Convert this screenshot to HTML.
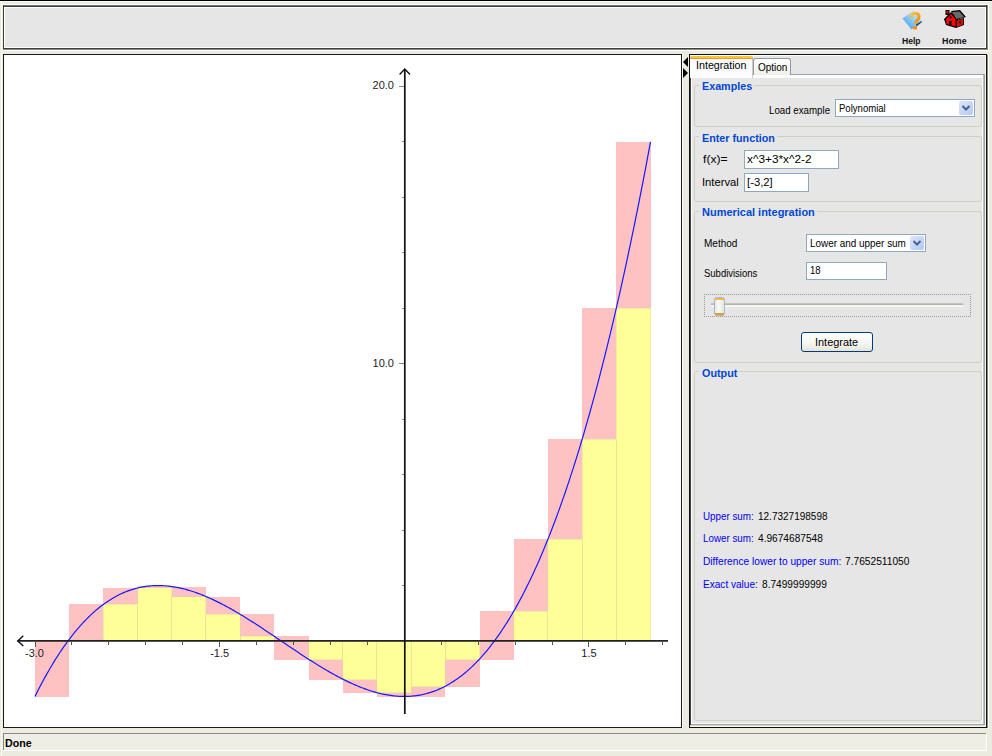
<!DOCTYPE html>
<html><head><meta charset="utf-8">
<style>
html,body{margin:0;padding:0;}
body{width:992px;height:756px;position:relative;overflow:hidden;background:#ecebdf;font-family:"Liberation Sans",sans-serif;font-size:10px;color:#000;}
.a{position:absolute;}
.box{position:absolute;box-sizing:border-box;}
.t{position:absolute;white-space:nowrap;line-height:1;transform-origin:0 0;}
.gb{position:absolute;box-sizing:border-box;border:1px solid #d0d0bf;border-radius:3px;}
.gt{position:absolute;white-space:nowrap;font-weight:bold;font-size:11px;color:#0046d5;background:#e6e6e6;padding:0 2px;line-height:1;}
.tf{position:absolute;box-sizing:border-box;border:1px solid #8fa8c0;background:#fff;}
</style></head><body>
<!-- top black line -->
<div class="a" style="left:0;top:0;width:992px;height:1px;background:#000"></div>
<div class="a" style="left:0;top:1px;width:992px;height:1px;background:#fbfbf3"></div>
<div class="a" style="left:1px;top:1px;width:1px;height:755px;background:#fbfbf3"></div>
<!-- header -->
<div class="box" style="left:3px;top:4px;width:986px;height:47px;background:#fff;"></div>
<div class="box" style="left:3px;top:5px;width:985px;height:45px;background:#8a8a82;"></div>
<div class="box" style="left:3px;top:5px;width:984px;height:44px;background:#3e3e3e;"></div>
<div class="box" style="left:4px;top:5px;width:982px;height:1px;background:#767676;"></div>
<div class="box" style="left:4px;top:7px;width:982px;height:41px;background:#fff;"></div>
<div class="box" style="left:5px;top:8px;width:980px;height:39px;background:#e6e6e6;"></div>
<!-- plot panel -->
<div class="box" style="left:682px;top:54px;width:1px;height:674px;background:#fff;"></div>
<div class="box" style="left:3px;top:54px;width:679px;height:674px;background:#1a1a1a;"></div>
<div class="box" style="left:4px;top:55px;width:677px;height:672px;background:#fff;"></div>
<!-- right panel -->
<div class="box" style="left:988px;top:54px;width:1px;height:675px;background:#fff;"></div>
<div class="box" style="left:987px;top:55px;width:1px;height:673px;background:#8a8a82;"></div>
<div class="box" style="left:689px;top:54px;width:298px;height:674px;background:#111;"></div>
<div class="box" style="left:690px;top:55px;width:296px;height:672px;background:#f8f6e6;"></div>
<div class="box" style="left:690px;top:55px;width:295px;height:670px;background:#fff;"></div>
<div class="box" style="left:690px;top:56px;width:295px;height:18px;background:#e6e6e6;"></div>
<div class="box" style="left:690px;top:74px;width:295px;height:651px;background:#9ca5a5;"></div>
<div class="box" style="left:983px;top:75px;width:1px;height:649px;background:#b8c0c4;"></div>
<div class="box" style="left:690px;top:74px;width:1px;height:651px;background:#3c4648;"></div>
<div class="box" style="left:691px;top:75px;width:292px;height:649px;background:#fcfcfe;"></div>
<div class="box" style="left:692px;top:78px;width:290px;height:645px;background:#e6e6e6;"></div>
<div class="box" style="left:690px;top:725px;width:295px;height:1px;background:#d8dad6;"></div>
<!-- split arrows -->
<svg class="a" style="left:682px;top:56px" width="8" height="24"><path d="M6,1 L1,6 L6,11 Z" fill="#000"/><path d="M1,12 L6,17 L1,22 Z" fill="#000"/></svg>
<!-- tabs -->
<div class="box" style="left:690px;top:56px;width:63px;height:22px;background:#fcfcfe;border-right:1px solid #c8ccd0;border-radius:0 3px 0 0;"></div>
<div class="box" style="left:690px;top:56px;width:63px;height:3px;background:linear-gradient(#ffc83c,#e8901c);border-radius:2px 3px 0 0;"></div>
<div class="box" style="left:692px;top:57px;width:60px;height:1px;background:#ffc83c;"></div>
<div class="box" style="left:753px;top:58px;width:38px;height:17px;background:linear-gradient(#fff,#f0f0ea);border:1px solid #919b9c;border-bottom:none;border-radius:3px 3px 0 0;"></div>

<!-- Examples -->
<div class="gb" style="left:694px;top:85px;width:288px;height:42px;"></div>
<div class="a" style="left:699px;top:84px;width:55px;height:3px;background:#e6e6e6"></div>
<div class="tf" style="left:835px;top:99px;width:140px;height:18px;"></div>
<div class="a" style="left:959px;top:101px;width:14px;height:14px;background:linear-gradient(135deg,#dce6fd,#b3c8f7);border-radius:2px;"></div>
<svg class="a" style="left:959px;top:101px" width="14" height="14"><path d="M3.5,5 L7,8.5 L10.5,5" fill="none" stroke="#4d6185" stroke-width="2"/></svg>

<!-- Enter function -->
<div class="gb" style="left:694px;top:136px;width:288px;height:66px;"></div>
<div class="a" style="left:699px;top:135px;width:78px;height:3px;background:#e6e6e6"></div>
<div class="tf" style="left:744px;top:150px;width:95px;height:19px;"></div>
<div class="tf" style="left:744px;top:173px;width:65px;height:19px;"></div>

<!-- Numerical integration -->
<div class="gb" style="left:694px;top:211px;width:288px;height:152px;"></div>
<div class="a" style="left:699px;top:210px;width:118px;height:3px;background:#e6e6e6"></div>
<div class="tf" style="left:806px;top:234px;width:120px;height:18px;"></div>
<div class="a" style="left:910px;top:236px;width:14px;height:14px;background:linear-gradient(135deg,#dce6fd,#b3c8f7);border-radius:2px;"></div>
<svg class="a" style="left:910px;top:236px" width="14" height="14"><path d="M3.5,5 L7,8.5 L10.5,5" fill="none" stroke="#4d6185" stroke-width="2"/></svg>
<div class="tf" style="left:806px;top:262px;width:81px;height:18px;"></div>
<!-- slider -->
<div class="a" style="left:704px;top:294px;width:267px;height:23px;box-sizing:border-box;border:1px dotted #999;"></div>
<div class="a" style="left:711px;top:303px;width:252px;height:1px;background:#c4c3bc;"></div>
<div class="a" style="left:711px;top:304px;width:252px;height:1px;background:#b4b3ac;"></div>
<div class="a" style="left:711px;top:305px;width:252px;height:2px;background:#f6f5ee;"></div>
<div class="a" style="left:714px;top:297px;width:11px;height:19px;box-sizing:border-box;border:1px solid #a7b8c8;border-radius:3px;background:linear-gradient(90deg,#e8e8e2,#fafaf8 40%,#e4e4de);"></div>
<div class="a" style="left:715px;top:298px;width:9px;height:2px;background:#f7b64a;"></div>
<div class="a" style="left:715px;top:313px;width:9px;height:2px;background:#e59c2c;"></div>
<!-- button -->
<div class="a" style="left:801px;top:332px;width:72px;height:20px;box-sizing:border-box;border:1px solid #003c74;border-radius:3px;background:linear-gradient(#fff 0%,#f4f4f0 60%,#e6e4da 100%);"></div>

<!-- Output -->
<div class="gb" style="left:694px;top:371px;width:288px;height:350px;"></div>
<div class="a" style="left:699px;top:370px;width:40px;height:3px;background:#e6e6e6"></div>

<!-- status bar -->
<div class="a" style="left:3px;top:733px;width:984px;height:18px;background:#fff;"></div>
<div class="a" style="left:3px;top:733px;width:983px;height:17px;background:#888;"></div>
<div class="a" style="left:4px;top:734px;width:982px;height:16px;background:#efeee4;"></div>

<!-- help/home -->
<svg class="a" style="left:900px;top:8px" width="26" height="24">
  <defs><linearGradient id="hb" x1="0" y1="1" x2="1" y2="0"><stop offset="0" stop-color="#2f8ee8"/><stop offset="0.5" stop-color="#8ccaf6"/><stop offset="1" stop-color="#e4f4fc"/></linearGradient>
  <linearGradient id="ho" x1="0" y1="0" x2="1" y2="1"><stop offset="0" stop-color="#ffc640"/><stop offset="1" stop-color="#f08800"/></linearGradient></defs>
  <path d="M2.5,10.5 L13,3 L22,12.5 L11.5,21.5 Z" fill="url(#hb)"/>
  <path d="M16,16.5 L21.5,13 L22,14 L16.5,18.5 Z" fill="#1c3f6a"/>
  <path d="M11.3,9.6 C11.1,6.4 13.3,5.2 15.3,5.2 C17.9,5.2 19.3,6.9 19,9.2 C18.7,11.4 16.6,12.3 15.9,14 L15.6,15.6" fill="none" stroke="url(#ho)" stroke-width="3" stroke-linecap="butt"/>
  <rect x="13.2" y="18" width="3.8" height="3.4" fill="#f39000"/>
</svg>
<svg class="a" style="left:942px;top:8px" width="26" height="22">
  <rect x="3.5" y="2" width="4" height="5" fill="#000"/><rect x="4.5" y="3" width="2" height="2.5" fill="#e00"/>
  <path d="M2,11 L9,4 L16,11 L14,20 L4,17 Z" fill="#000"/>
  <path d="M9,3 L18,2 L24,9 L14,12 Z" fill="#000"/>
  <path d="M10,4 L17.5,3.5 L22,9 L14.5,11 Z" fill="#6a6a6a"/>
  <path d="M4,11 L9,6 L13.5,11 L13.5,18.5 L4.5,16 Z" fill="#f00"/>
  <path d="M14,12 L22,10 L22,17 L14,20 Z" fill="#000"/>
  <path d="M15,12.5 L21,11 L21,16.5 L15,19 Z" fill="#e00"/>
  <rect x="7" y="13" width="2.5" height="5" fill="#000"/>
  <rect x="7.5" y="8.5" width="2" height="2" fill="#000"/>
  <rect x="17" y="13" width="2" height="2.5" fill="#300"/>
</svg>

<svg width="992" height="756" style="position:absolute;left:0;top:0"><defs><clipPath id="pc"><rect x="5" y="56" width="675" height="670"/></clipPath></defs><g clip-path="url(#pc)" shape-rendering="crispEdges"><rect x="35.00" y="641.00" width="34.19" height="55.95" fill="#ffc2c2"/><rect x="69.19" y="604.41" width="34.19" height="36.59" fill="#ffc2c2"/><rect x="103.39" y="587.99" width="34.19" height="53.01" fill="#ffc2c2"/><rect x="103.39" y="604.41" width="34.19" height="36.59" fill="#ffc2c2"/><rect x="103.39" y="604.41" width="34.19" height="36.59" fill="#ffff99"/><rect x="137.58" y="585.55" width="34.19" height="55.45" fill="#ffc2c2"/><rect x="137.58" y="587.99" width="34.19" height="53.01" fill="#ffc2c2"/><rect x="137.58" y="587.99" width="34.19" height="53.01" fill="#ffff99"/><rect x="171.78" y="586.54" width="34.19" height="54.46" fill="#ffc2c2"/><rect x="171.78" y="596.50" width="34.19" height="44.50" fill="#ffc2c2"/><rect x="171.78" y="596.50" width="34.19" height="44.50" fill="#ffff99"/><rect x="205.97" y="596.50" width="34.19" height="44.50" fill="#ffc2c2"/><rect x="205.97" y="614.30" width="34.19" height="26.70" fill="#ffc2c2"/><rect x="205.97" y="614.30" width="34.19" height="26.70" fill="#ffff99"/><rect x="240.17" y="614.30" width="34.19" height="26.70" fill="#ffc2c2"/><rect x="240.17" y="636.38" width="34.19" height="4.62" fill="#ffc2c2"/><rect x="240.17" y="636.38" width="34.19" height="4.62" fill="#ffff99"/><rect x="274.36" y="636.38" width="34.19" height="4.62" fill="#ffc2c2"/><rect x="274.36" y="641.00" width="34.19" height="18.68" fill="#ffc2c2"/><rect x="308.56" y="641.00" width="34.19" height="18.68" fill="#ffc2c2"/><rect x="308.56" y="641.00" width="34.19" height="38.62" fill="#ffc2c2"/><rect x="308.56" y="641.00" width="34.19" height="18.68" fill="#ffff99"/><rect x="342.75" y="641.00" width="34.19" height="38.62" fill="#ffc2c2"/><rect x="342.75" y="641.00" width="34.19" height="52.15" fill="#ffc2c2"/><rect x="342.75" y="641.00" width="34.19" height="38.62" fill="#ffff99"/><rect x="376.94" y="641.00" width="34.19" height="52.15" fill="#ffc2c2"/><rect x="376.94" y="641.00" width="34.19" height="55.95" fill="#ffc2c2"/><rect x="376.94" y="641.00" width="34.19" height="52.15" fill="#ffff99"/><rect x="411.14" y="641.00" width="34.19" height="45.68" fill="#ffc2c2"/><rect x="411.14" y="641.00" width="34.19" height="55.69" fill="#ffc2c2"/><rect x="411.14" y="641.00" width="34.19" height="45.68" fill="#ffff99"/><rect x="445.33" y="641.00" width="34.19" height="18.56" fill="#ffc2c2"/><rect x="445.33" y="641.00" width="34.19" height="45.68" fill="#ffc2c2"/><rect x="445.33" y="641.00" width="34.19" height="18.56" fill="#ffff99"/><rect x="479.53" y="611.26" width="34.19" height="29.74" fill="#ffc2c2"/><rect x="479.53" y="641.00" width="34.19" height="18.56" fill="#ffc2c2"/><rect x="513.72" y="539.21" width="34.19" height="101.79" fill="#ffc2c2"/><rect x="513.72" y="611.26" width="34.19" height="29.74" fill="#ffc2c2"/><rect x="513.72" y="611.26" width="34.19" height="29.74" fill="#ffff99"/><rect x="547.92" y="439.36" width="34.19" height="201.64" fill="#ffc2c2"/><rect x="547.92" y="539.21" width="34.19" height="101.79" fill="#ffc2c2"/><rect x="547.92" y="539.21" width="34.19" height="101.79" fill="#ffff99"/><rect x="582.11" y="308.12" width="34.19" height="332.88" fill="#ffc2c2"/><rect x="582.11" y="439.36" width="34.19" height="201.64" fill="#ffc2c2"/><rect x="582.11" y="439.36" width="34.19" height="201.64" fill="#ffff99"/><rect x="616.31" y="141.95" width="34.19" height="499.05" fill="#ffc2c2"/><rect x="616.31" y="308.12" width="34.19" height="332.88" fill="#ffc2c2"/><rect x="616.31" y="308.12" width="34.19" height="332.88" fill="#ffff99"/><rect x="69.19" y="639.38" width="34.19" height="1.62" fill="none" stroke="#d8d6a0" stroke-width="0.6" stroke-opacity="0.7"/><rect x="103.39" y="604.41" width="34.19" height="36.59" fill="none" stroke="#d8d6a0" stroke-width="0.6" stroke-opacity="0.7"/><rect x="137.58" y="587.99" width="34.19" height="53.01" fill="none" stroke="#d8d6a0" stroke-width="0.6" stroke-opacity="0.7"/><rect x="171.78" y="596.50" width="34.19" height="44.50" fill="none" stroke="#d8d6a0" stroke-width="0.6" stroke-opacity="0.7"/><rect x="205.97" y="614.30" width="34.19" height="26.70" fill="none" stroke="#d8d6a0" stroke-width="0.6" stroke-opacity="0.7"/><rect x="240.17" y="636.38" width="34.19" height="4.62" fill="none" stroke="#d8d6a0" stroke-width="0.6" stroke-opacity="0.7"/><rect x="308.56" y="641.00" width="34.19" height="18.18" fill="none" stroke="#d8d6a0" stroke-width="0.6" stroke-opacity="0.7"/><rect x="342.75" y="641.00" width="34.19" height="38.12" fill="none" stroke="#d8d6a0" stroke-width="0.6" stroke-opacity="0.7"/><rect x="376.94" y="641.00" width="34.19" height="51.65" fill="none" stroke="#d8d6a0" stroke-width="0.6" stroke-opacity="0.7"/><rect x="411.14" y="641.00" width="34.19" height="45.18" fill="none" stroke="#d8d6a0" stroke-width="0.6" stroke-opacity="0.7"/><rect x="445.33" y="641.00" width="34.19" height="18.06" fill="none" stroke="#d8d6a0" stroke-width="0.6" stroke-opacity="0.7"/><rect x="513.72" y="611.26" width="34.19" height="29.74" fill="none" stroke="#d8d6a0" stroke-width="0.6" stroke-opacity="0.7"/><rect x="547.92" y="539.21" width="34.19" height="101.79" fill="none" stroke="#d8d6a0" stroke-width="0.6" stroke-opacity="0.7"/><rect x="582.11" y="439.36" width="34.19" height="201.64" fill="none" stroke="#d8d6a0" stroke-width="0.6" stroke-opacity="0.7"/><rect x="616.31" y="308.12" width="34.19" height="332.88" fill="none" stroke="#d8d6a0" stroke-width="0.6" stroke-opacity="0.7"/></g><g clip-path="url(#pc)"><polyline fill="none" stroke="#1818ff" stroke-width="1.2" points="35.00,696.45 36.54,693.36 38.08,690.32 39.62,687.33 41.16,684.39 42.69,681.50 44.23,678.66 45.77,675.87 47.31,673.13 48.85,670.44 50.39,667.80 51.93,665.21 53.47,662.67 55.00,660.18 56.54,657.73 58.08,655.33 59.62,652.98 61.16,650.67 62.70,648.41 64.24,646.20 65.78,644.03 67.31,641.91 68.85,639.83 70.39,637.80 71.93,635.82 73.47,633.87 75.01,631.97 76.55,630.12 78.09,628.31 79.62,626.54 81.16,624.81 82.70,623.12 84.24,621.48 85.78,619.88 87.32,618.32 88.86,616.80 90.40,615.32 91.93,613.89 93.47,612.49 95.01,611.13 96.55,609.81 98.09,608.53 99.63,607.29 101.17,606.08 102.70,604.92 104.24,603.79 105.78,602.70 107.32,601.65 108.86,600.63 110.40,599.65 111.94,598.71 113.48,597.80 115.01,596.93 116.55,596.09 118.09,595.29 119.63,594.52 121.17,593.78 122.71,593.08 124.25,592.42 125.79,591.78 127.33,591.18 128.86,590.61 130.40,590.08 131.94,589.57 133.48,589.10 135.02,588.66 136.56,588.25 138.10,587.87 139.64,587.52 141.17,587.19 142.71,586.90 144.25,586.64 145.79,586.41 147.33,586.21 148.87,586.03 150.41,585.88 151.95,585.76 153.48,585.67 155.02,585.60 156.56,585.56 158.10,585.55 159.64,585.56 161.18,585.60 162.72,585.67 164.26,585.75 165.79,585.87 167.33,586.01 168.87,586.17 170.41,586.35 171.95,586.56 173.49,586.80 175.03,587.05 176.56,587.33 178.10,587.63 179.64,587.95 181.18,588.29 182.72,588.66 184.26,589.04 185.80,589.44 187.34,589.87 188.88,590.32 190.41,590.78 191.95,591.26 193.49,591.77 195.03,592.29 196.57,592.83 198.11,593.38 199.65,593.96 201.19,594.55 202.72,595.16 204.26,595.78 205.80,596.43 207.34,597.08 208.88,597.76 210.42,598.45 211.96,599.15 213.50,599.87 215.03,600.60 216.57,601.35 218.11,602.10 219.65,602.88 221.19,603.66 222.73,604.46 224.27,605.27 225.81,606.10 227.34,606.93 228.88,607.78 230.42,608.64 231.96,609.50 233.50,610.38 235.04,611.27 236.58,612.17 238.12,613.08 239.65,613.99 241.19,614.92 242.73,615.85 244.27,616.80 245.81,617.75 247.35,618.70 248.89,619.67 250.43,620.64 251.96,621.62 253.50,622.60 255.04,623.59 256.58,624.59 258.12,625.59 259.66,626.59 261.20,627.60 262.74,628.62 264.27,629.64 265.81,630.66 267.35,631.68 268.89,632.71 270.43,633.74 271.97,634.77 273.51,635.81 275.05,636.84 276.58,637.88 278.12,638.92 279.66,639.96 281.20,641.00 282.74,642.04 284.28,643.08 285.82,644.12 287.36,645.16 288.89,646.19 290.43,647.23 291.97,648.26 293.51,649.29 295.05,650.32 296.59,651.34 298.13,652.36 299.67,653.38 301.20,654.40 302.74,655.41 304.28,656.41 305.82,657.41 307.36,658.41 308.90,659.40 310.44,660.38 311.98,661.36 313.51,662.33 315.05,663.30 316.59,664.25 318.13,665.20 319.67,666.15 321.21,667.08 322.75,668.01 324.29,668.92 325.82,669.83 327.36,670.73 328.90,671.62 330.44,672.50 331.98,673.36 333.52,674.22 335.06,675.07 336.60,675.90 338.13,676.73 339.67,677.54 341.21,678.34 342.75,679.12 344.29,679.90 345.83,680.65 347.37,681.40 348.90,682.13 350.44,682.85 351.98,683.55 353.52,684.24 355.06,684.92 356.60,685.57 358.14,686.22 359.68,686.84 361.22,687.45 362.75,688.04 364.29,688.62 365.83,689.17 367.37,689.71 368.91,690.23 370.45,690.74 371.99,691.22 373.53,691.68 375.06,692.13 376.60,692.56 378.14,692.96 379.68,693.34 381.22,693.71 382.76,694.05 384.30,694.37 385.84,694.67 387.37,694.95 388.91,695.20 390.45,695.44 391.99,695.65 393.53,695.83 395.07,695.99 396.61,696.13 398.15,696.25 399.68,696.33 401.22,696.40 402.76,696.44 404.30,696.45 405.84,696.44 407.38,696.40 408.92,696.33 410.45,696.24 411.99,696.12 413.53,695.97 415.07,695.79 416.61,695.59 418.15,695.36 419.69,695.10 421.23,694.81 422.76,694.48 424.30,694.13 425.84,693.75 427.38,693.34 428.92,692.90 430.46,692.43 432.00,691.92 433.54,691.39 435.07,690.82 436.61,690.22 438.15,689.58 439.69,688.92 441.23,688.22 442.77,687.48 444.31,686.71 445.85,685.91 447.38,685.07 448.92,684.20 450.46,683.29 452.00,682.35 453.54,681.37 455.08,680.35 456.62,679.30 458.16,678.21 459.70,677.08 461.23,675.92 462.77,674.71 464.31,673.47 465.85,672.19 467.39,670.87 468.93,669.51 470.47,668.11 472.00,666.68 473.54,665.20 475.08,663.68 476.62,662.12 478.16,660.52 479.70,658.88 481.24,657.19 482.78,655.46 484.31,653.69 485.85,651.88 487.39,650.03 488.93,648.13 490.47,646.18 492.01,644.20 493.55,642.17 495.09,640.09 496.62,637.97 498.16,635.80 499.70,633.59 501.24,631.33 502.78,629.02 504.32,626.67 505.86,624.27 507.40,621.82 508.94,619.33 510.47,616.79 512.01,614.20 513.55,611.56 515.09,608.87 516.63,606.13 518.17,603.34 519.71,600.50 521.25,597.61 522.78,594.67 524.32,591.68 525.86,588.64 527.40,585.55 528.94,582.40 530.48,579.21 532.02,575.96 533.55,572.65 535.09,569.30 536.63,565.89 538.17,562.42 539.71,558.91 541.25,555.33 542.79,551.71 544.33,548.02 545.87,544.28 547.40,540.49 548.94,536.64 550.48,532.73 552.02,528.77 553.56,524.75 555.10,520.67 556.64,516.53 558.17,512.34 559.71,508.09 561.25,503.77 562.79,499.40 564.33,494.97 565.87,490.48 567.41,485.93 568.95,481.32 570.48,476.65 572.02,471.92 573.56,467.12 575.10,462.27 576.64,457.35 578.18,452.37 579.72,447.33 581.26,442.22 582.80,437.05 584.33,431.82 585.87,426.52 587.41,421.16 588.95,415.73 590.49,410.24 592.03,404.69 593.57,399.07 595.11,393.38 596.64,387.62 598.18,381.80 599.72,375.92 601.26,369.96 602.80,363.94 604.34,357.85 605.88,351.69 607.42,345.46 608.95,339.17 610.49,332.80 612.03,326.37 613.57,319.86 615.11,313.29 616.65,306.64 618.19,299.93 619.73,293.14 621.26,286.28 622.80,279.35 624.34,272.35 625.88,265.27 627.42,258.12 628.96,250.90 630.50,243.61 632.03,236.24 633.57,228.80 635.11,221.28 636.65,213.69 638.19,206.02 639.73,198.28 641.27,190.46 642.81,182.57 644.35,174.60 645.88,166.55 647.42,158.43 648.96,150.23 650.50,141.95"/></g><g shape-rendering="crispEdges"><rect x="35" y="642" width="1" height="5" fill="#555"/><rect x="71" y="642" width="1" height="3" fill="#555"/><rect x="108" y="642" width="1" height="3" fill="#555"/><rect x="145" y="642" width="1" height="3" fill="#555"/><rect x="182" y="642" width="1" height="3" fill="#555"/><rect x="219" y="642" width="1" height="5" fill="#555"/><rect x="256" y="642" width="1" height="3" fill="#555"/><rect x="293" y="642" width="1" height="3" fill="#555"/><rect x="330" y="642" width="1" height="3" fill="#555"/><rect x="367" y="642" width="1" height="3" fill="#555"/><rect x="441" y="642" width="1" height="3" fill="#555"/><rect x="478" y="642" width="1" height="3" fill="#555"/><rect x="515" y="642" width="1" height="3" fill="#555"/><rect x="552" y="642" width="1" height="3" fill="#555"/><rect x="588" y="642" width="1" height="5" fill="#555"/><rect x="625" y="642" width="1" height="3" fill="#555"/><rect x="662" y="642" width="1" height="3" fill="#555"/><rect x="402" y="585" width="2" height="1" fill="#888"/><rect x="402" y="530" width="2" height="1" fill="#888"/><rect x="402" y="474" width="2" height="1" fill="#888"/><rect x="402" y="419" width="2" height="1" fill="#888"/><rect x="399" y="363" width="5" height="1" fill="#888"/><rect x="402" y="308" width="2" height="1" fill="#888"/><rect x="402" y="252" width="2" height="1" fill="#888"/><rect x="402" y="197" width="2" height="1" fill="#888"/><rect x="402" y="141" width="2" height="1" fill="#888"/><rect x="399" y="86" width="5" height="1" fill="#888"/></g><line x1="17.5" y1="640.9" x2="668" y2="640.9" stroke="#222" stroke-width="1.7"/><path d="M23.3,635.8 L17.8,640.9 L23.3,646" fill="none" stroke="#111" stroke-width="1.4"/><line x1="404.8" y1="69" x2="404.8" y2="714" stroke="#111" stroke-width="1.7"/><path d="M399.6,74.4 L404.8,69 L410,74.4" fill="none" stroke="#111" stroke-width="1.4"/><g font-family="Liberation Sans, sans-serif" font-size="11" fill="#222"><text x="394" y="89.4" text-anchor="end">20.0</text><text x="394" y="366.6" text-anchor="end">10.0</text><text x="34.5" y="657" text-anchor="middle">-3.0</text><text x="219.7" y="657" text-anchor="middle">-1.5</text><text x="589.0" y="657" text-anchor="middle">1.5</text></g></svg>
<div class="t" style="left:695.53px;top:59.69px;font-size:11px;font-weight:400;color:#000;transform:scaleX(0.9712)">Integration</div>
<div class="t" style="left:757.70px;top:61.69px;font-size:11px;font-weight:400;color:#000;transform:scaleX(0.9074)">Option</div>
<div class="t" style="left:701.70px;top:80.69px;font-size:11px;font-weight:700;color:#0046d5;transform:scaleX(0.9757)">Examples</div>
<div class="t" style="left:768.60px;top:104.69px;font-size:11px;font-weight:400;color:#000;transform:scaleX(0.8842)">Load example</div>
<div class="t" style="left:838.70px;top:102.69px;font-size:11px;font-weight:400;color:#000;transform:scaleX(0.8677)">Polynomial</div>
<div class="t" style="left:701.70px;top:132.69px;font-size:11px;font-weight:700;color:#0046d5;transform:scaleX(0.9769)">Enter function</div>
<div class="t" style="left:703.30px;top:153.69px;font-size:11px;font-weight:400;color:#000;transform:scaleX(1.1059)">f(x)=</div>
<div class="t" style="left:746.60px;top:153.69px;font-size:11px;font-weight:400;color:#000;transform:scaleX(1.0742)">x^3+3*x^2-2</div>
<div class="t" style="left:702.48px;top:176.69px;font-size:11px;font-weight:400;color:#000;transform:scaleX(1.0194)">Interval</div>
<div class="t" style="left:746.60px;top:176.69px;font-size:11px;font-weight:400;color:#000;transform:scaleX(1.0236)">[-3,2]</div>
<div class="t" style="left:701.60px;top:206.69px;font-size:11px;font-weight:700;color:#0046d5;transform:scaleX(0.9977)">Numerical integration</div>
<div class="t" style="left:703.50px;top:237.69px;font-size:11px;font-weight:400;color:#000;transform:scaleX(0.9105)">Method</div>
<div class="t" style="left:809.50px;top:237.69px;font-size:11px;font-weight:400;color:#000;transform:scaleX(0.9009)">Lower and upper sum</div>
<div class="t" style="left:703.50px;top:267.69px;font-size:11px;font-weight:400;color:#000;transform:scaleX(0.8626)">Subdivisions</div>
<div class="t" style="left:809.50px;top:264.69px;font-size:11px;font-weight:400;color:#000;transform:scaleX(0.8665)">18</div>
<div class="t" style="left:814.71px;top:336.69px;font-size:11px;font-weight:400;color:#000;transform:scaleX(0.9929)">Integrate</div>
<div class="t" style="left:701.90px;top:367.69px;font-size:11px;font-weight:700;color:#0046d5;transform:scaleX(0.9814)">Output</div>
<div class="t" style="left:703.30px;top:510.69px;font-size:11px;font-weight:400;color:#0000f0;transform:scaleX(0.8909)">Upper sum:</div>
<div class="t" style="left:758.10px;top:510.69px;font-size:11px;font-weight:400;color:#000;transform:scaleX(0.9090)">12.7327198598</div>
<div class="t" style="left:703.30px;top:532.69px;font-size:11px;font-weight:400;color:#0000f0;transform:scaleX(0.8909)">Lower sum:</div>
<div class="t" style="left:757.90px;top:532.69px;font-size:11px;font-weight:400;color:#000;transform:scaleX(0.9212)">4.9674687548</div>
<div class="t" style="left:703.20px;top:555.69px;font-size:11px;font-weight:400;color:#0000f0;transform:scaleX(0.9242)">Difference lower to upper sum:</div>
<div class="t" style="left:845.20px;top:555.69px;font-size:11px;font-weight:400;color:#000;transform:scaleX(0.9263)">7.7652511050</div>
<div class="t" style="left:703.20px;top:578.69px;font-size:11px;font-weight:400;color:#0000f0;transform:scaleX(0.9154)">Exact value:</div>
<div class="t" style="left:762.00px;top:578.69px;font-size:11px;font-weight:400;color:#000;transform:scaleX(0.9212)">8.7499999999</div>
<div class="t" style="left:4.50px;top:737.69px;font-size:11px;font-weight:700;color:#000;transform:scaleX(0.9714)">Done</div>
<div class="t" style="left:902.10px;top:37.38px;font-size:9px;font-weight:700;color:#111;transform:scaleX(0.9547)">Help</div>
<div class="t" style="left:942.10px;top:37.38px;font-size:9px;font-weight:700;color:#111;transform:scaleX(0.9840)">Home</div>
</body></html>
